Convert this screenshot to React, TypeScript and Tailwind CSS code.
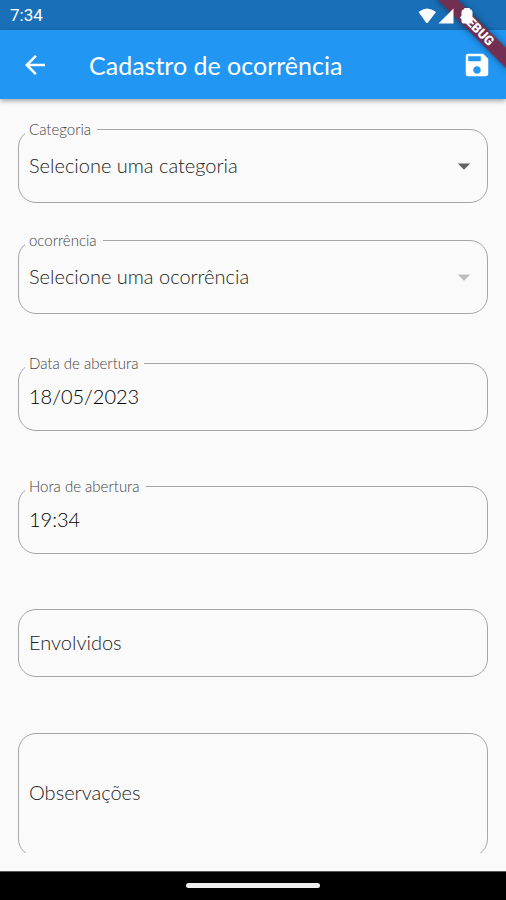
import { useState, type ReactNode } from "react";
import { MdArrowBack, MdArrowDropDown, MdSave } from "react-icons/md";

const outline = "min-w-0 rounded-[18px] border border-[#a6a6a6]";
const valueText = "w-full bg-transparent px-1 text-xl font-light outline-none";

function StatusIcons() {
  return (
    <svg className="relative z-20 h-5 w-[58px]" viewBox="0 0 58 20" fill="#fff" aria-hidden="true">
      <path d="M1.500 6Q10 -1 19 6L11 16.500Q10 17.500 9 16.500Z" />
      <path d="M36.500 2.500V17.500H21.500Z" />
      <path d="M46 3.500H47V3Q47 2 48 2H52Q53 2 53 3V3.500H54Q55.500 4 55.500 6V15.500Q55.500 17.500 53.500 17.500H46.500Q44.500 17.500 44.500 15.500V6Q44.500 4 46 3.500Z" />
    </svg>
  );
}

function NotchedField({ id, label, children }: { id: string; label: string; children: ReactNode }) {
  return (
    <fieldset className={`${outline} px-[6px] pb-2`}>
      <legend className="h-[17px] pl-1 pr-[6px] text-[15px] font-light leading-[17px] text-[#444]">
        <label htmlFor={id} className="block">
          {label}
        </label>
      </legend>
      {children}
    </fieldset>
  );
}

function SelectField({ id, label, hint, disabled }: { id: string; label: string; hint: string; disabled?: boolean }) {
  return (
    <NotchedField id={id} label={label}>
      <div className="grid items-center">
        <select
          id={id}
          disabled={disabled}
          className={`${valueText} col-start-1 row-start-1 h-14 appearance-none pb-[2px] text-[#222] opacity-100`}
        >
          <option>{hint}</option>
        </select>
        <MdArrowDropDown
          size={30}
          aria-hidden="true"
          className={`pointer-events-none col-start-1 row-start-1 mr-[2px] justify-self-end ${
            disabled ? "text-[#bdbdbd]" : "text-[#616161]"
          }`}
        />
      </div>
    </NotchedField>
  );
}

function TextField({ id, label, initial }: { id: string; label: string; initial: string }) {
  const [value, setValue] = useState(initial);
  return (
    <NotchedField id={id} label={label}>
      <input
        id={id}
        value={value}
        onChange={(e) => setValue(e.target.value)}
        className={`${valueText} block h-[50px] pb-[2px] text-black`}
      />
    </NotchedField>
  );
}

export default function App() {
  return (
    <div className="relative flex h-screen flex-col overflow-hidden bg-[#fafafa] font-['Lato',sans-serif]">
      <div className="flex h-[30px] shrink-0 items-center justify-between bg-[#1a70b8] pl-[10px] pr-[31px] pt-[2px] font-['Roboto',sans-serif] text-[17px] text-white">
        <span>7:34</span>
        <StatusIcons />
      </div>

      <header className="flex h-[69px] shrink-0 items-center bg-[#2196f3] pl-5 pr-[14px] text-white shadow-[0_2px_5px_rgba(0,0,0,0.35)]">
        <button type="button" aria-label="Voltar">
          <MdArrowBack size={30} />
        </button>
        <h1 className="ml-[39px] flex-1 pt-[2px] text-[25px]">Cadastro de ocorrência</h1>
        <button type="button" aria-label="Salvar">
          <MdSave size={30} />
        </button>
      </header>

      <div className="absolute -right-[21px] top-[22px] z-10 flex h-[14px] w-[100px] rotate-45 items-center justify-center bg-[#722f50] font-['Roboto',sans-serif] text-[13px] font-black text-white shadow-[0_0_7px_rgba(0,0,0,0.5)]">
        DEBUG
      </div>

      <main className="flex min-h-0 flex-1 flex-col p-[18px]">
        <form className="min-h-0 flex-1 overflow-hidden pt-1">
          <div className="flex flex-col gap-[29px]">
            <SelectField id="categoria" label="Categoria" hint="Selecione uma categoria" />
            <SelectField id="ocorrencia" label="ocorrência" hint="Selecione uma ocorrência" disabled />
          </div>
          <div className="mt-[41px] flex flex-col gap-[47px]">
            <TextField id="data" label="Data de abertura" initial="18/05/2023" />
            <TextField id="hora" label="Hora de abertura" initial="19:34" />
            <div className="flex flex-col gap-14 pt-2">
              <div className={`${outline} px-[6px]`}>
                <input
                  aria-label="Envolvidos"
                  placeholder="Envolvidos"
                  className={`${valueText} block h-[66px] pb-[2px] placeholder:text-[#222]`}
                />
              </div>
              <div className={`${outline} px-[6px]`}>
                <textarea
                  aria-label="Observações"
                  placeholder="Observações"
                  className={`${valueText} block h-[122px] resize-none pt-11 placeholder:text-[#222]`}
                />
              </div>
            </div>
          </div>
        </form>
      </main>

      <footer className="flex h-[29px] shrink-0 items-center justify-center border-t border-[#555] bg-black pb-[2px]">
        <div className="h-[5px] w-[134px] rounded-sm bg-[#eee]" />
      </footer>
    </div>
  );
}
